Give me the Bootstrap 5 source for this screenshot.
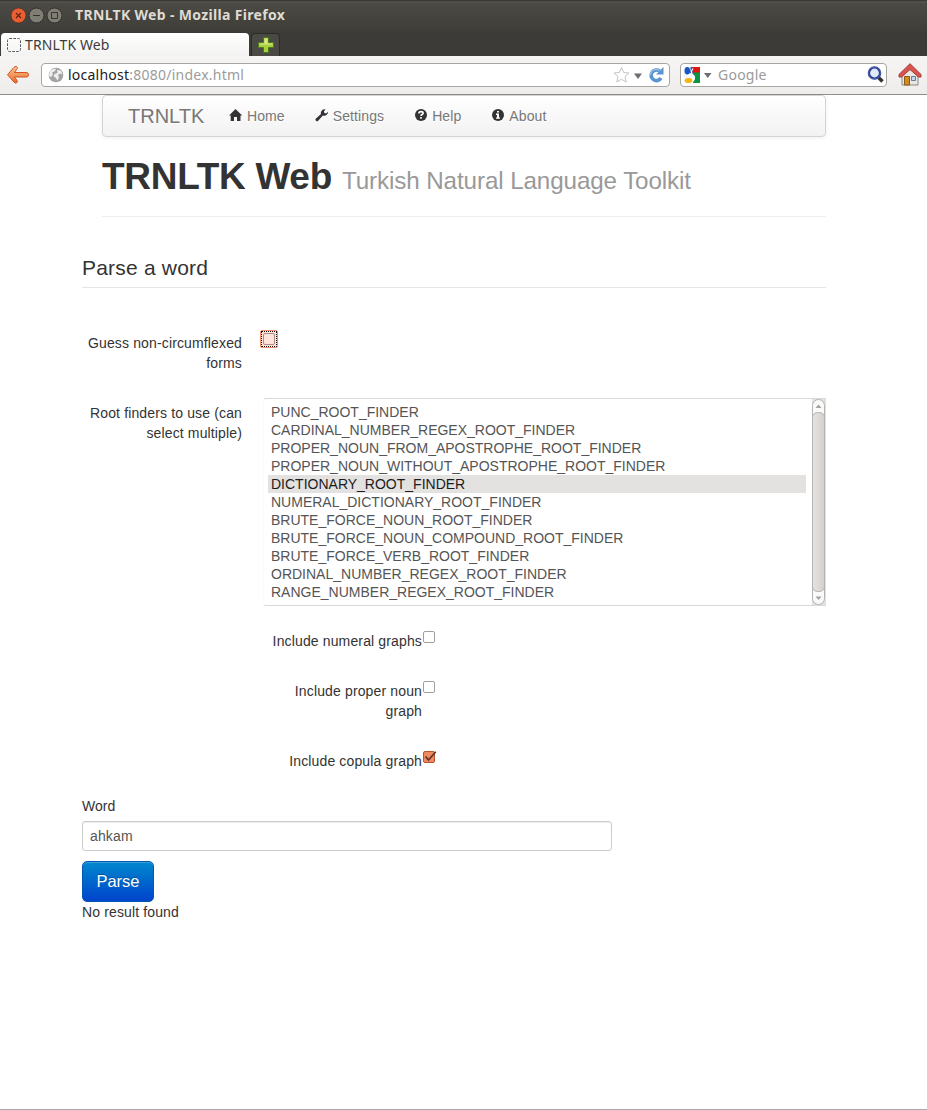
<!DOCTYPE html>
<html lang="en">
<head>
<meta charset="utf-8">
<meta name="viewport" content="width=device-width, initial-scale=1">
<title>TRNLTK Web</title>
<link rel="stylesheet" href="https://cdn.jsdelivr.net/npm/bootstrap@5.3.0/dist/css/bootstrap.min.css">
<style>
body{font:14px/20px "Liberation Sans",Arial,sans-serif;color:#333;background:#fff;height:1110px;overflow:hidden;border-bottom:1px solid #a8a8a8}
svg{display:block;flex:none}
.browser{font-family:"Noto Sans","Open Sans",sans-serif;font-size:14px}
.titlebar{height:32px;background:linear-gradient(#2f2e2a 0,#5a5852 2px,#4b4a44 3px,#3e3d38);padding-left:10px;color:#dfdbd2;font-weight:700}
.win-title{margin-left:13px;line-height:30px;letter-spacing:.33px;padding-bottom:2px}
.tabstrip{height:24px;background:#3c3b37}
.tab-on{width:248px;height:23px;margin-left:1px;background:linear-gradient(#fff,#f4f3f2);border-radius:4px 4px 0 0;color:#3c3c3c;padding-left:6px;letter-spacing:.1px}
.tab-on svg{margin-right:4px}
.tab-new{width:29px;height:23px;margin-left:2px;background:#4a4944;border:1px solid #2c2b28;border-bottom:0;border-radius:4px 4px 0 0}
.toolbar-row{height:39px;background:linear-gradient(#f6f5f4,#eeedeb);border-bottom:1px solid #8f8f8d;padding:0 5px 1px 6px}
.field{height:24px;background:#fff;border:1px solid #a8a6a2;border-radius:4px;color:#9b9b9b;letter-spacing:.24px}
.field .field-text{margin-left:4px;padding-top:1px}
.field .host{color:#222}
.address{width:629px;margin-left:11px;padding:0 5px 0 6px;flex:1 0 0}
.search{width:207px;margin-left:10px;padding:0 2px 0 3px}
.search .field-text{margin-left:6px}
.home-icon{margin-left:11px}
.page{width:744px;margin-left:82px}
.site-nav{height:42px;margin-left:20px;padding:0 0 0 25px;background:linear-gradient(#fff,#f2f2f2);border:1px solid #d4d4d4;border-radius:4px;box-shadow:0 1px 4px rgba(0,0,0,.065);color:#777;text-shadow:0 1px 0 #fff;letter-spacing:.1px}
.site-brand{font-size:20px;width:101px;letter-spacing:0}
.site-nav a{color:#777;text-decoration:none}
.site-nav .nav-item-link{margin-right:30px}
.site-head{margin-left:20px;height:80px;border-bottom:1px solid #eee;padding-top:20px}
.site-head h1{font-size:37px;line-height:40px;font-weight:700;margin:0;color:#333;letter-spacing:-.3px;white-space:nowrap}
.site-head .sub{font-size:24.2px;font-weight:400;color:#999;letter-spacing:-.1px}
.legend-line{font-size:21px;line-height:40px;margin-top:31px;height:40px;border-bottom:1px solid #e5e5e5;letter-spacing:.2px}
.lbl{width:160px;text-align:right;letter-spacing:.14px;white-space:nowrap}
.guess-row{padding-top:42px;height:110px}
.guess-row .lbl{padding-top:3px}
.finder-row .lbl{padding-top:5px}
.graph-row .lbl{margin-left:180px}
.graph-row .tick{margin-left:1px}
.picker{width:563px;height:208px;margin-left:21px;border:1px solid #d9d9d9;border-left-color:#fafafa;border-right:0;border-radius:3px 0 0 3px;padding-left:4px;color:#555;line-height:18px}
.picker ul{width:538px;padding-top:4px}
.picker li{height:18px;padding-left:3px}
.picker li.on{background:#e3e2e1;color:#1c1c1c}
.tick{appearance:none;width:12px;height:12px;border:1px solid #a3a09c;border-radius:2px;background:#fff;margin:0;display:block}
.focus-box{width:18px;height:18px;margin-left:18px;background:#fde3da;border:1px solid #f4906b;outline:1px dotted #111;border-radius:2px;padding:2px;outline-offset:-2px}
.focus-box .tick{background:#fde3da;border-color:#b08b80}
.word{width:530px;height:30px;margin-top:5px;border:1px solid #ccc;border-radius:3px;padding:4px 7px;font-size:14px;line-height:20px;color:#555;letter-spacing:.15px;box-shadow:inset 0 1px 1px rgba(0,0,0,.075)}
.btn-parse,.btn-parse:hover{height:41px;width:72px;margin-top:10px;padding:0;font-size:16.5px;color:#fff;background:linear-gradient(#08c,#04c);border:1px solid #0357b4;border-radius:5px;text-shadow:0 -1px 0 rgba(0,0,0,.25);box-shadow:inset 0 1px 0 rgba(255,255,255,.2)}
.result{letter-spacing:.13px}
</style>
</head>
<body class="d-flex flex-column">
<header class="browser">
 <div class="titlebar d-flex align-items-center">
  <svg width="52" height="18" viewBox="0 0 52 18"><circle cx="8.500" cy="8.500" r="7.500" fill="#ea5f32" stroke="#4a2a1f" stroke-width=".7"/><path d="M6 6l5 5m0-5l-5 5" stroke="#592515" stroke-width="1.100"/><circle cx="26.500" cy="8.500" r="7.500" fill="#807d75" stroke="#33322e"/><path d="M23 8.500h7" stroke="#35342f" stroke-width="1"/><circle cx="44.500" cy="8.500" r="7.500" fill="#807d75" stroke="#33322e"/><path d="M41.500 5.500h6v6h-6z" fill="none" stroke="#35342f" stroke-width="1"/></svg>
  <span class="win-title">TRNLTK Web - Mozilla Firefox</span>
 </div>
 <div class="tabstrip d-flex align-items-end">
  <div class="tab-on d-flex align-items-center"><svg width="14" height="14" viewBox="0 0 14 14"><rect x=".5" y=".5" width="13" height="13" rx="2" fill="none" stroke="#555" stroke-dasharray="2.600 1.300"/></svg>TRNLTK Web</div>
  <div class="tab-new d-flex align-items-center justify-content-center"><svg width="16" height="16" viewBox="0 0 16 16"><path d="M5.500.5h5v5h5v5h-5v5h-5v-5h-5v-5h5z" fill="#a9d13f" stroke="#4e7a1e"/><path d="M6.500 1.500h3v5h5v1h-13v-1h5z" fill="#d4ea86"/></svg></div>
 </div>
 <div class="toolbar-row d-flex align-items-center">
  <svg width="24" height="20" viewBox="0 0 24 20"><defs><linearGradient id="arrowFill" x2="0" y2="1"><stop stop-color="#f8c893"/><stop offset="1" stop-color="#e9692c"/></linearGradient></defs><path d="M1.500 9.800L8 2.300q2.500-2.300 3.300.2.200 1-.6 1.800L8.500 7.500h12.300q1.700.3 1.700 2.300t-1.700 2.200H8.500l2.200 3q.8 1 .6 1.900-.8 2.500-3.300.2z" fill="url(#arrowFill)" stroke="#d4521f"/></svg>
  <div class="field address d-flex align-items-center">
   <svg width="16" height="16" viewBox="0 0 16 16"><circle cx="8" cy="8" r="7.300" fill="#a3a3a3"/><path d="M2 3.500q4-2.500 6-1.500l-1 2-3 1.500 1 2-2 2.500-2-1zM9 3l4 .5 1.500 4-2.500-1-2 1.500 1 2.500-1.500 3-2-3-2-1 1-2.500 3-1z" fill="#eee"/></svg>
   <span class="field-text"><span class="host">localhost</span>:8080/index.html</span>
   <svg class="ms-auto" width="51" height="18" viewBox="0 0 51 18"><path d="M8.500 1.500l2.200 5 5.300.5-4 3.600 1.200 5.400-4.700-2.800L3.800 16 5 10.600 1 7l5.300-.5z" fill="#fff" stroke="#c3c3c3"/><path d="M21 7.500h8L25 13z" fill="#6e6e6e"/><path d="M46.500 5A5.300 5.300 0 1 0 48 12" fill="none" stroke="#5b95cf" stroke-width="3.600"/><path d="M50.500 1v7.500h-7.500z" fill="#5b95cf"/><path d="M46 4.300A5.500 5.500 0 0 0 37.500 9" fill="none" stroke="#a9cdee"/></svg>
  </div>
  <div class="field search d-flex align-items-center">
   <svg width="28" height="16" viewBox="0 0 28 16"><path d="M0 0h8v16H0z" fill="#f3f6fc"/><path d="M8 0h8v6H8z" fill="#e4140f"/><path d="M9 5.500h7V16H9z" fill="#0b9441"/><path d="M7 16q5-4 2-8" fill="none" stroke="#fff" stroke-width="2"/><ellipse cx="3.300" cy="3.800" rx="2.800" ry="3.800" fill="#1757bf"/><path d="M6.500 0h2v7q-1.500 0-2.500-1 1-3 .5-6z" fill="#1757bf"/><path d="M4.500 8.500q4-1 3-4.500L9 1.500" fill="none" stroke="#fff" stroke-width="1.200"/><ellipse cx="4.500" cy="13.500" rx="3.800" ry="2.500" fill="#f6b40c"/><path d="M20 6h7.500l-3.700 5z" fill="#6e6e6e"/></svg>
   <span class="field-text">Google</span>
   <svg class="ms-auto" width="17" height="17" viewBox="0 0 17 17"><path d="M11.500 11.500l4 4" stroke="#333" stroke-width="3.600"/><circle cx="7.500" cy="7" r="5.600" fill="#dfe9f8" stroke="#2c3e94" stroke-width="2.400"/><circle cx="7.500" cy="7" r="6" fill="none" stroke="#7f93cf" stroke-width=".4"/></svg>
  </div>
  <svg class="home-icon" width="24" height="24" viewBox="0 0 24 24"><path d="M4 12l8-8 8 8v10H4z" fill="#e9e7e3" stroke="#888"/><path d="M6.500 13.500h5V22h-5z" fill="#d18b22" stroke="#8c5a10"/><path d="M13.500 13.500h4v4h-4z" fill="#c3d8ee" stroke="#6b7d90"/><path d="M1 11.500L12 .7l11 10.800v2.500h-2.500L12 6.500 3.500 14H1z" fill="#d9534f" stroke="#a33a36"/></svg>
 </div>
</header>
<main class="page flex-grow-1">
 <nav class="site-nav d-flex align-items-center">
  <a class="site-brand" href="#">TRNLTK</a>
  <a class="nav-item-link d-flex align-items-center" href="#"><svg width="14" height="14" viewBox="0 0 14 14"><path d="M6.500 0L13.200 6.500H11.500V12H8V8H5v4H1.700V6.500H0z" fill="#333"/></svg><span class="ms-1">Home</span></a>
  <a class="nav-item-link d-flex align-items-center" href="#"><svg width="14" height="14" viewBox="0 0 14 14"><path d="M13 2.700a3.700 3.700 0 0 1-5.200 3.700L3.200 11.800a1.500 1.500 0 0 1-2.200-2.200l5-4.500A3.700 3.700 0 0 1 10.500.4L8.900 2.400l.5 1.600 1.700.4z" fill="#333"/></svg><span class="ms-1">Settings</span></a>
  <a class="nav-item-link d-flex align-items-center" href="#"><svg width="14" height="14" viewBox="0 0 14 14"><circle cx="7" cy="6" r="6" fill="#333"/><path d="M4.900 4.500q0-1.900 2.100-1.900T9.100 4.200q0 .9-1.100 1.400-.9.400-.9 1.300M7 8v1.700" fill="none" stroke="#fff" stroke-width="1.600"/></svg><span class="ms-1">Help</span></a>
  <a class="nav-item-link d-flex align-items-center" href="#"><svg width="14" height="14" viewBox="0 0 14 14"><circle cx="7" cy="6" r="6" fill="#333"/><path d="M6 2h2v1.600H6zM5 4.600h3v3.800h1v1.300H5V8.400h1V5.900H5z" fill="#fff"/></svg><span class="ms-1">About</span></a>
 </nav>
 <div class="site-head"><h1>TRNLTK Web <span class="sub">Turkish Natural Language Toolkit</span></h1></div>
 <div class="legend-line">Parse a word</div>
 <form>
  <div class="guess-row d-flex">
   <div class="lbl">Guess non-circumflexed<br>forms</div>
   <div class="focus-box"><input type="checkbox" class="tick"></div>
  </div>
  <div class="finder-row d-flex">
   <div class="lbl">Root finders to use (can<br>select multiple)</div>
   <div class="picker d-flex justify-content-between">
    <ul class="list-unstyled m-0">
     <li>PUNC_ROOT_FINDER</li>
     <li>CARDINAL_NUMBER_REGEX_ROOT_FINDER</li>
     <li>PROPER_NOUN_FROM_APOSTROPHE_ROOT_FINDER</li>
     <li>PROPER_NOUN_WITHOUT_APOSTROPHE_ROOT_FINDER</li>
     <li class="on">DICTIONARY_ROOT_FINDER</li>
     <li>NUMERAL_DICTIONARY_ROOT_FINDER</li>
     <li>BRUTE_FORCE_NOUN_ROOT_FINDER</li>
     <li>BRUTE_FORCE_NOUN_COMPOUND_ROOT_FINDER</li>
     <li>BRUTE_FORCE_VERB_ROOT_FINDER</li>
     <li>ORDINAL_NUMBER_REGEX_ROOT_FINDER</li>
     <li>RANGE_NUMBER_REGEX_ROOT_FINDER</li>
    </ul>
    <svg width="14" height="206" viewBox="0 0 14 206"><defs><linearGradient id="thumbFill"><stop stop-color="#e6e4e2"/><stop offset="1" stop-color="#d3d0cd"/></linearGradient></defs><path d="M0 0h14v206H0z" fill="#e2e0de"/><rect x=".5" y=".5" width="12" height="205" rx="6" fill="#fafafa" stroke="#b5b2af"/><rect x=".5" y="13.500" width="12" height="179" rx="5" fill="url(#thumbFill)" stroke="#b5b2af"/><path d="M3.500 9h6l-3-3.500zM3.500 197.500h6l-3 3.500z" fill="#a5a19d"/></svg>
   </div>
  </div>
  <div class="graph-row d-flex" style="margin-top:25px;height:50px"><div class="lbl">Include numeral graphs</div><input type="checkbox" class="tick"></div>
  <div class="graph-row d-flex" style="height:70px"><div class="lbl">Include proper noun<br>graph</div><input type="checkbox" class="tick"></div>
  <div class="graph-row d-flex" style="height:45px"><div class="lbl">Include copula graph</div><svg width="16" height="13" viewBox="0 0 16 13"><rect x="1.500" y=".5" width="11" height="11" rx="1.500" fill="#ef8a60" stroke="#b5532f"/><path d="M3.500 5.500l3 3.500L13.800.8" fill="none" stroke="#5d3526" stroke-width="1.700"/></svg></div>
  <label class="d-block" for="word">Word</label>
  <input class="word d-block" id="word" value="ahkam">
  <button type="button" class="btn btn-parse d-block">Parse</button>
  <div class="result">No result found</div>
 </form>
</main>
<script src="https://cdn.jsdelivr.net/npm/bootstrap@5.3.0/dist/js/bootstrap.bundle.min.js"></script>
</body>
</html>
